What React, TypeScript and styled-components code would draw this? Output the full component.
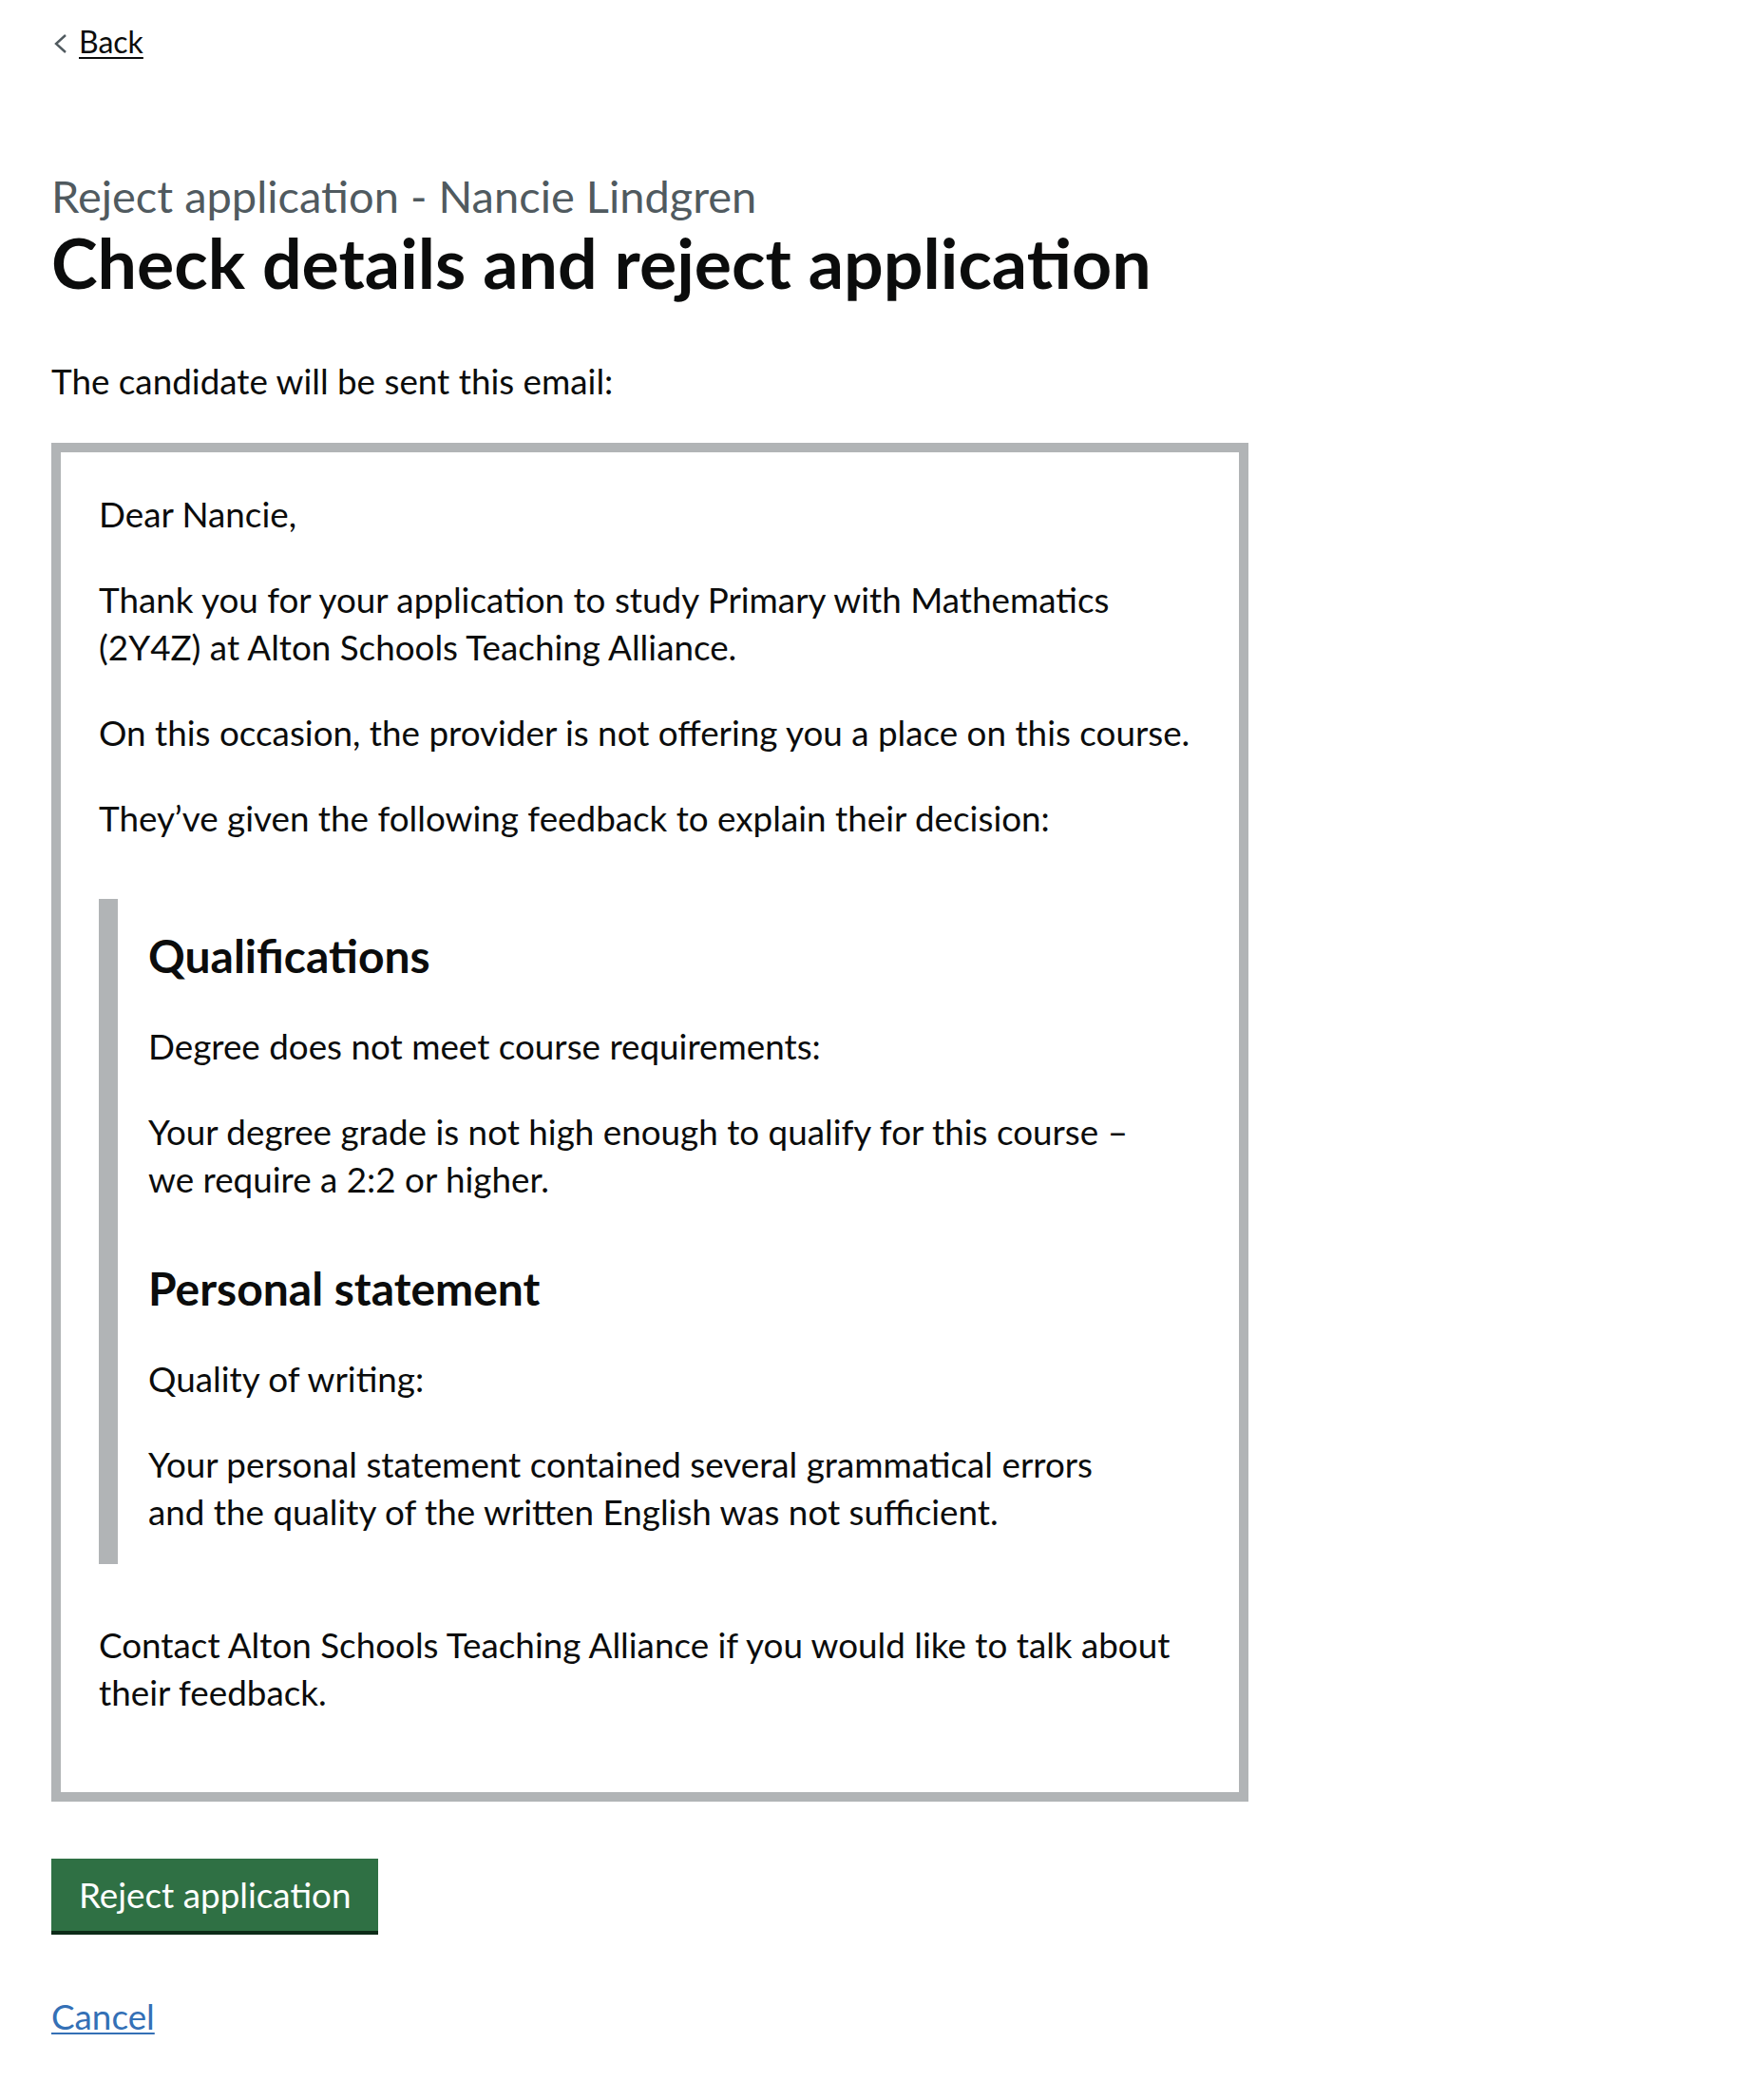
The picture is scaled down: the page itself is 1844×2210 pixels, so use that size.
import React from "react";
import styled, { createGlobalStyle } from "styled-components";

const Global = createGlobalStyle`
  html, body { margin: 0; padding: 0; background: #ffffff; }
  body {
    font-family: Lato, "Liberation Sans", Arial, sans-serif;
    color: #0b0c0c;
    -webkit-font-smoothing: antialiased;
  }
`;

const Page = styled.div`
  padding: 0 0 60px 54px;
`;

const BackLink = styled.a`
  display: inline-flex;
  align-items: center;
  gap: 12px;
  margin-top: 24px;
  padding-left: 1px;
  font-size: 32px;
  line-height: 40px;
  color: #0b0c0c;
  text-decoration: none;
  cursor: pointer;
`;

const BackText = styled.span`
  text-decoration: underline;
  text-decoration-thickness: 2px;
  text-underline-offset: 4px;
`;

const Chevron = styled.svg`
  display: block;
  width: 16px;
  height: 24px;
  margin-top: 4px;
  flex: none;
`;

const Main = styled.main`
  display: block;
  padding-top: 112px;
`;

const Caption = styled.span`
  display: block;
  font-size: 47px;
  line-height: 60px;
  color: #505a5f;
`;

const Heading = styled.h1`
  margin: 0 0 60px;
  font-size: 73.5px;
  line-height: 80px;
  font-weight: 700;
  color: #0b0c0c;
`;

const Para = styled.p`
  margin: 0 0 40px;
  font-size: 36.8px;
  line-height: 50px;
  color: #0b0c0c;
`;

const EmailBox = styled.div`
  box-sizing: border-box;
  width: 1260px;
  margin: 0 0 60px;
  padding: 40px;
  border: 10px solid #b1b4b6;
`;

const Inset = styled.div`
  box-sizing: border-box;
  max-width: 1133px;
  margin: 60px 0;
  padding: 30px 32px;
  border-left: 20px solid #b1b4b6;

  & > :last-child {
    margin-bottom: 0;
  }
`;

const SectionHeading = styled.h2<{ $first?: boolean }>`
  margin: 0 0 40px;
  padding-top: ${(p) => (p.$first ? "0" : "20px")};
  font-size: 48px;
  line-height: 60px;
  font-weight: 700;
  color: #0b0c0c;
`;

const Button = styled.button`
  display: block;
  margin: 0 0 65px;
  padding: 13px 29px 13px;
  border: 0;
  border-radius: 0;
  background: #2f7044;
  box-shadow: 0 4px 0 #0d2b18;
  color: #ffffff;
  font-family: inherit;
  font-size: 36.8px;
  line-height: 50px;
  cursor: pointer;
`;

const LinkRow = styled.p`
  margin: 0;
  font-size: 36.8px;
  line-height: 50px;
`;

const CancelLink = styled.a`
  color: #3470b6;
  text-decoration: underline;
  text-decoration-thickness: 2px;
  text-underline-offset: 3px;
  cursor: pointer;
`;

const feedback = [
  {
    title: "Qualifications",
    reason: "Degree does not meet course requirements:",
    detail:
      "Your degree grade is not high enough to qualify for this course – we require a 2:2 or higher.",
  },
  {
    title: "Personal statement",
    reason: "Quality of writing:",
    detail:
      "Your personal statement contained several grammatical errors and the quality of the written English was not sufficient.",
  },
];

export default function App() {
  return (
    <>
      <Global />
      <Page>
        <BackLink href="#">
          <Chevron viewBox="0 0 16 24" aria-hidden="true">
            <polyline points="14,3 4,12 14,21" fill="none" stroke="#505a5f" strokeWidth="2.4" />
          </Chevron>
          <BackText>Back</BackText>
        </BackLink>
        <Main>
          <Caption>Reject application - Nancie Lindgren</Caption>
          <Heading>Check details and reject application</Heading>
          <Para>The candidate will be sent this email:</Para>
          <EmailBox>
            <Para>Dear Nancie,</Para>
            <Para>
              Thank you for your application to study Primary with Mathematics (2Y4Z) at Alton
              Schools Teaching Alliance.
            </Para>
            <Para>On this occasion, the provider is not offering you a place on this course.</Para>
            <Para>They’ve given the following feedback to explain their decision:</Para>
            <Inset>
              {feedback.map((f, i) => (
                <React.Fragment key={f.title}>
                  <SectionHeading $first={i === 0}>{f.title}</SectionHeading>
                  <Para>{f.reason}</Para>
                  <Para>{f.detail}</Para>
                </React.Fragment>
              ))}
            </Inset>
            <Para>
              Contact Alton Schools Teaching Alliance if you would like to talk about their feedback.
            </Para>
          </EmailBox>
          <Button type="button">Reject application</Button>
          <LinkRow>
            <CancelLink href="#">Cancel</CancelLink>
          </LinkRow>
        </Main>
      </Page>
    </>
  );
}
